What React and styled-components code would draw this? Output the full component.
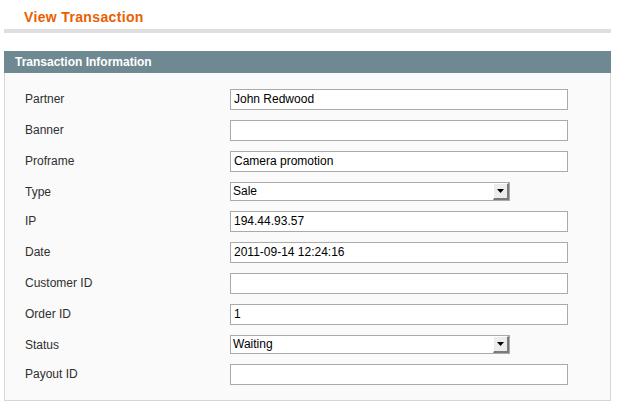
import React from "react";
import styled, { createGlobalStyle } from "styled-components";

const GlobalStyle = createGlobalStyle`
  body {
    margin: 0;
    background: #ffffff;
    font-family: Arial, "Liberation Sans", Helvetica, sans-serif;
    font-size: 12px;
    color: #2f2f2f;
  }
`;

const Page = styled.div`
  width: 619px;
  padding: 0 8px 0 4px;
  box-sizing: border-box;
`;

const TitleBar = styled.div`
  height: 33px;
  display: flex;
  align-items: center;
  padding-left: 20px;
  padding-top: 4px;
  box-sizing: border-box;
  border-bottom: 4px solid #dfdfdf;
`;

const Title = styled.h3`
  margin: 0;
  font-size: 14px;
  font-weight: bold;
  letter-spacing: 0.35px;
  color: #eb5e00;
`;

const Panel = styled.section`
  margin-top: 18px;
`;

const PanelHead = styled.div`
  height: 22px;
  background: #6f8992;
  color: #ffffff;
  font-weight: bold;
  font-size: 12px;
  display: flex;
  align-items: center;
  padding-left: 11px;
`;

const PanelBody = styled.div`
  background: #fafafa;
  border: 1px solid #d6d6d6;
  border-top: 0;
  padding: 16px 20px 15px;
  display: flex;
  flex-direction: column;
  gap: 10px;
`;

const Row = styled.div`
  display: flex;
  align-items: flex-start;
`;

const Label = styled.label`
  width: 205px;
  flex: none;
  padding-top: 3px;
  line-height: 14px;
  color: #2f2f2f;
`;

const TextInput = styled.div`
  width: 338px;
  height: 21px;
  box-sizing: border-box;
  border: 1px solid #aaaaaa;
  background: #ffffff;
  color: #000000;
  padding: 0 3px;
  font-size: 12px;
  line-height: 19px;
`;

const SelectBox = styled.div`
  width: 280px;
  height: 19px;
  box-sizing: border-box;
  border: 1px solid #aaaaaa;
  background: #ffffff;
  color: #000000;
  display: flex;
  align-items: stretch;
`;

const SelectValue = styled.span`
  flex: 1;
  padding-left: 2px;
  line-height: 17px;
`;

const SelectButton = styled.span`
  width: 16px;
  box-sizing: border-box;
  background: #ececec;
  border-top: 1px solid #ffffff;
  border-left: 1px solid #ffffff;
  border-right: 2px solid #7a7a7a;
  border-bottom: 2px solid #7a7a7a;
  display: flex;
  align-items: center;
  justify-content: center;

  svg {
    display: block;
  }
`;

const fields = [
  { label: "Partner", value: "John Redwood" },
  { label: "Banner", value: "" },
  { label: "Proframe", value: "Camera promotion" },
  { label: "Type", value: "Sale", select: true },
  { label: "IP", value: "194.44.93.57" },
  { label: "Date", value: "2011-09-14 12:24:16" },
  { label: "Customer ID", value: "" },
  { label: "Order ID", value: "1" },
  { label: "Status", value: "Waiting", select: true },
  { label: "Payout ID", value: "" },
];

export default function App() {
  return (
    <Page>
      <GlobalStyle />
      <TitleBar>
        <Title>View Transaction</Title>
      </TitleBar>
      <Panel>
        <PanelHead>Transaction Information</PanelHead>
        <PanelBody>
          {fields.map((f) => (
            <Row key={f.label}>
              <Label>{f.label}</Label>
              {f.select ? (
                <SelectBox>
                  <SelectValue>{f.value}</SelectValue>
                  <SelectButton>
                    <svg width="7" height="4" viewBox="0 0 7 4">
                      <path d="M0 0h7L3.5 4z" fill="#000" />
                    </svg>
                  </SelectButton>
                </SelectBox>
              ) : (
                <TextInput>{f.value}</TextInput>
              )}
            </Row>
          ))}
        </PanelBody>
      </Panel>
    </Page>
  );
}
